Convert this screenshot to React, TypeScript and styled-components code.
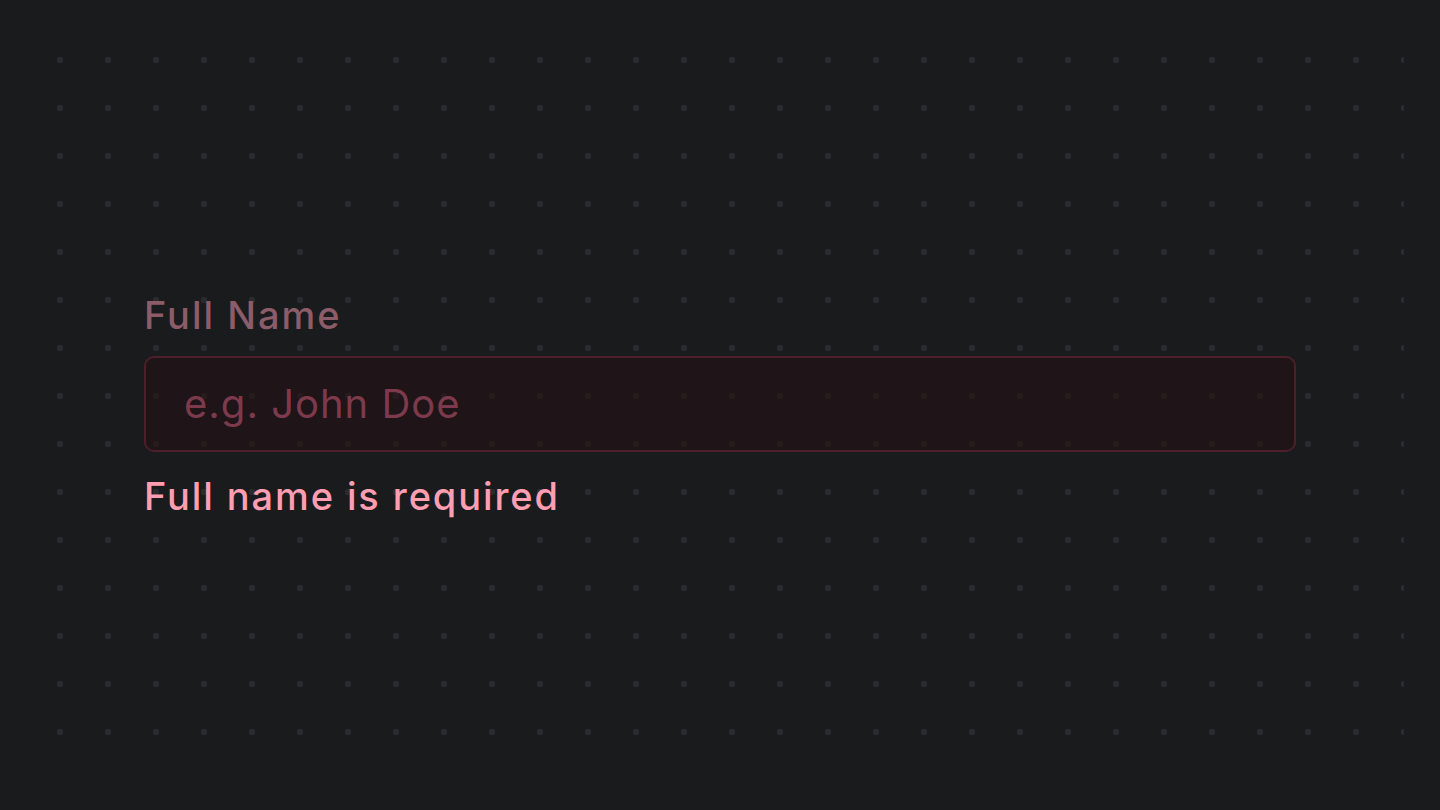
import styled, { createGlobalStyle } from "styled-components";

const GlobalStyle = createGlobalStyle`
  html, body {
    margin: 0;
    padding: 0;
    background: #1a1b1d;
    font-family: Inter, "Noto Sans", sans-serif;
  }
`;

const Page = styled.div`
  width: 1440px;
  height: 810px;
  box-sizing: border-box;
  padding: 36px;
  background: #1a1b1d;
`;

const DotGrid = styled.div`
  width: 100%;
  height: 100%;
  display: flex;
  align-items: center;
  justify-content: center;
  background-image: radial-gradient(circle at 24px 24px, #2a2b2e 0, #2a2b2e 3px, transparent 3.5px);
  background-size: 48px 48px;
`;

const Field = styled.div`
  width: 1152px;
  display: flex;
  flex-direction: column;
`;

const Label = styled.label`
  font-size: 38px;
  font-weight: 500;
  line-height: 46px;
  letter-spacing: 2px;
  color: #8c5c69;
  margin-bottom: 18px;
`;

const Input = styled.input`
  box-sizing: border-box;
  width: 100%;
  height: 96px;
  padding: 0 38px;
  border: 2px solid #4c1f2a;
  border-radius: 10px;
  background: rgba(36, 14, 19, 0.55);
  font-family: inherit;
  font-size: 40px;
  letter-spacing: 1px;
  color: #e8dfe1;
  outline: none;

  &::placeholder {
    color: #7d3a4c;
  }
`;

const ErrorText = styled.span`
  margin-top: 21px;
  font-size: 38px;
  font-weight: 500;
  line-height: 46px;
  letter-spacing: 1.9px;
  color: #ff9eb1;
`;

export default function App() {
  return (
    <>
      <GlobalStyle />
      <Page>
        <DotGrid>
          <Field>
            <Label htmlFor="full-name">Full Name</Label>
            <Input id="full-name" placeholder="e.g. John Doe" />
            <ErrorText>Full name is required</ErrorText>
          </Field>
        </DotGrid>
      </Page>
    </>
  );
}
